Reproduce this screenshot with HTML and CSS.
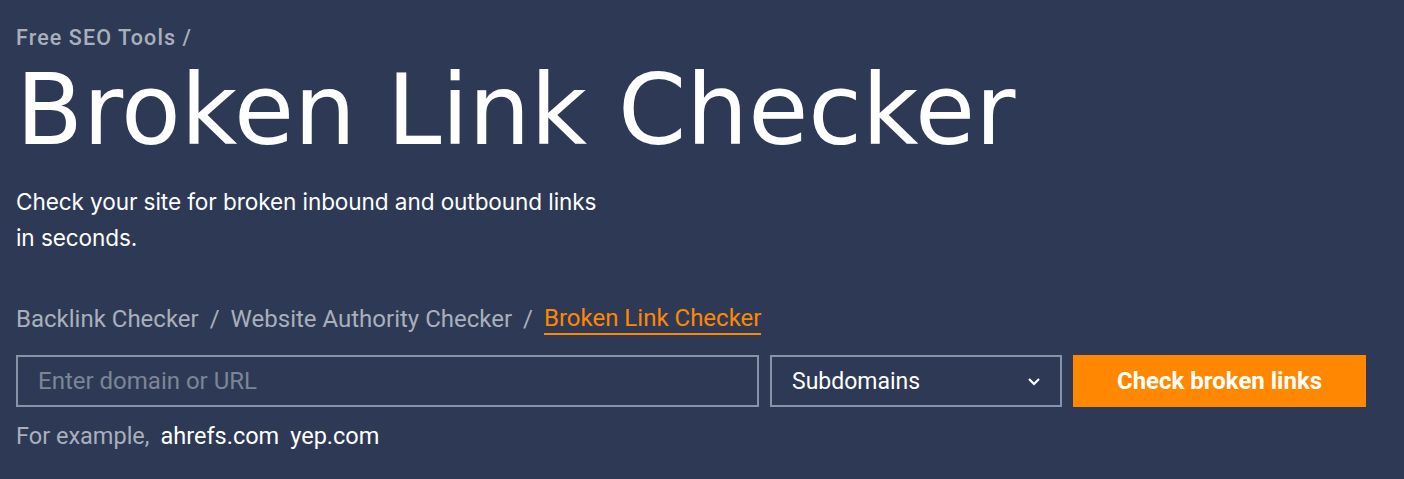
FILE: index.html
```html
<!DOCTYPE html>
<html>
<head>
<meta charset="utf-8">
<link rel="stylesheet" href="styles.css">
</head>
<body>
<main class="hero">
  <div class="crumb">Free SEO Tools /</div>
  <h1 class="title">Broken Link Checker</h1>
  <p class="lead">Check your site for broken inbound and outbound links<br>in seconds.</p>
  <nav class="tabs">
    <a class="tab">Backlink Checker</a>
    <span class="sep">/</span>
    <a class="tab">Website Authority Checker</a>
    <span class="sep">/</span>
    <a class="tab active">Broken Link Checker</a>
  </nav>
  <form class="form">
    <input class="input" type="text" placeholder="Enter domain or URL">
    <div class="select">
      <span>Subdomains</span>
      <svg class="chev" width="14" height="9" viewBox="0 0 14 9"><path d="M2 2 7 7l5-5" fill="none" stroke="#fff" stroke-width="2.2"/></svg>
    </div>
    <button class="btn" type="button">Check broken links</button>
  </form>
  <div class="examples">
    <span class="ex-label">For example,</span>
    <a class="ex">ahrefs.com</a>
    <a class="ex">yep.com</a>
  </div>
</main>
</body>
</html>
```
FILE: styles.css
```css
html, body {
  margin: 0;
  padding: 0;
  background: #2e3a55;
}
.hero {
  padding: 24px 16px 0 16px;
  font-family: "Roboto", "Liberation Sans", sans-serif;
  color: #fff;
}
.crumb {
  font-size: 21.5px;
  font-weight: 500;
  line-height: 28px;
  color: #a9afbc;
  letter-spacing: 1.1px;
}
.title {
  margin: 8px 0 0 0;
  font-family: "DejaVu Sans", sans-serif;
  font-weight: 400;
  font-size: 97.7px;
  line-height: 100px;
}
.lead {
  margin: 24px 0 0 0;
  font-family: "Inter", sans-serif;
  font-size: 22.6px;
  line-height: 36px;
  letter-spacing: -0.1px;
}
.tabs {
  margin-top: 47px;
  display: flex;
  align-items: center;
  gap: 11px;
  font-size: 24px;
  line-height: 30px;
  color: #a9afbc;
}
.tab { color: #a9afbc; }
.tab.active {
  color: #ff8800;
  border-bottom: 2px solid #ff8800;
}
.form {
  margin: 20px 0 0 0;
  display: flex;
  gap: 11px;
}
.input {
  box-sizing: border-box;
  width: 743px;
  height: 52px;
  background: transparent;
  border: 2px solid #8a93a6;
  padding: 0 20px;
  font: 24px "Roboto", sans-serif;
  color: #fff;
  outline: none;
}
.input::placeholder { color: #7c8598; }
.select {
  box-sizing: border-box;
  width: 292px;
  height: 52px;
  border: 2px solid #8a93a6;
  display: flex;
  align-items: center;
  justify-content: space-between;
  padding: 0 19px 0 20px;
  font-size: 23px;
  color: #fff;
}
.btn {
  width: 293px;
  height: 52px;
  border: 0;
  background: #ff8800;
  color: #fff;
  font: 700 24px "Roboto", sans-serif;
}
.examples {
  margin-top: 14px;
  display: flex;
  gap: 11px;
  font-size: 23.5px;
  line-height: 30px;
}
.ex-label { color: #a9afbc; }
.ex { color: #fff; }
```
